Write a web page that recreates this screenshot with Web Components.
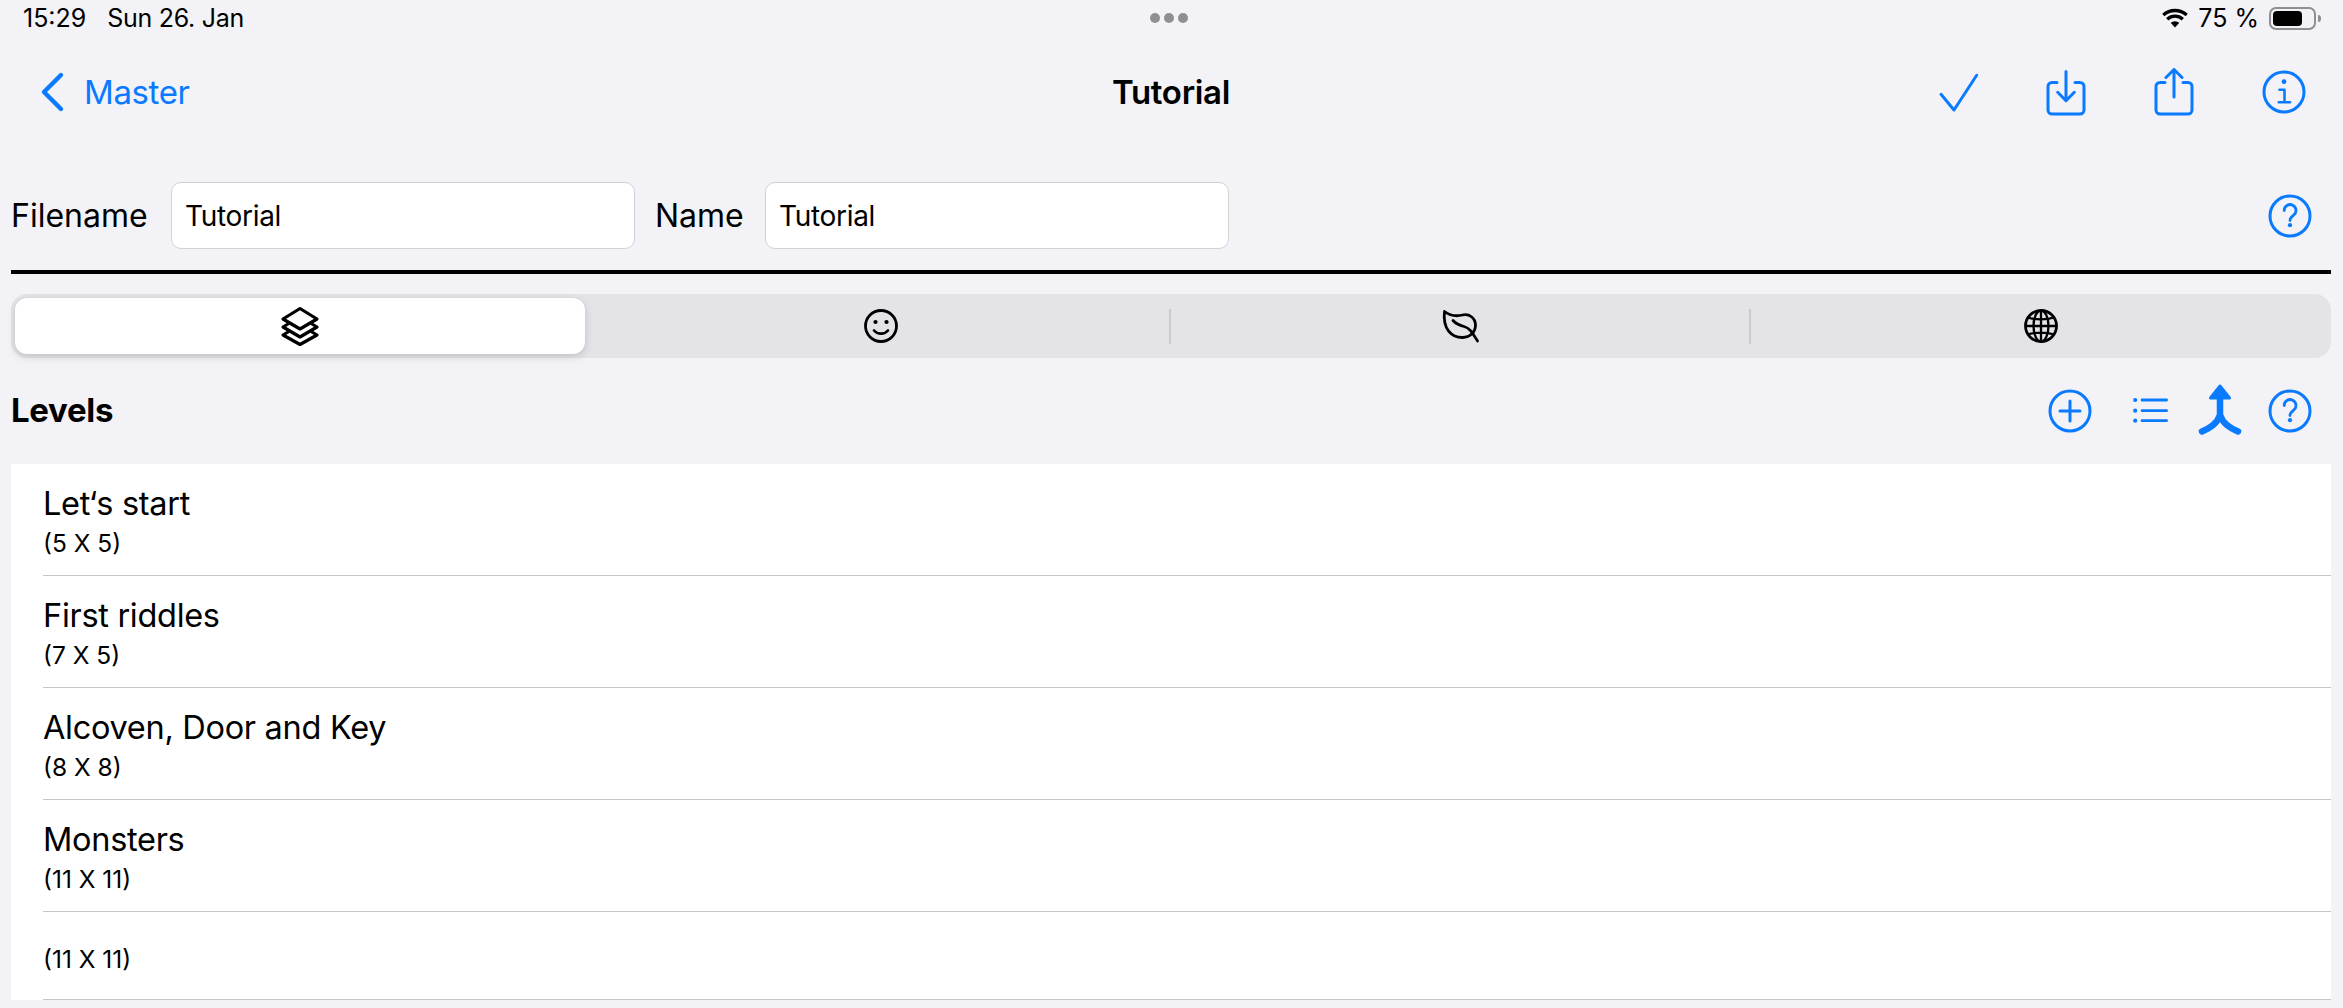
<!DOCTYPE html>
<html lang="en">
<head>
<meta charset="utf-8">
<title>Tutorial</title>
<style>
  html, body { margin: 0; background: #f2f2f7; }
  body { font-family: Inter, "Liberation Sans", sans-serif; color: #000; width: 2343px; height: 1008px; overflow: hidden; }
</style>
</head>
<body>
<editor-screen>
  <status-bar></status-bar>
  <nav-bar></nav-bar>
  <file-form></file-form>
  <tab-segments></tab-segments>
  <levels-header></levels-header>
  <level-list>
    <level-row><span slot="title">Let‘s start</span><span slot="sub">(5 X 5)</span></level-row>
    <level-row><span slot="title">First riddles</span><span slot="sub">(7 X 5)</span></level-row>
    <level-row><span slot="title">Alcoven, Door and Key</span><span slot="sub">(8 X 8)</span></level-row>
    <level-row><span slot="title">Monsters</span><span slot="sub">(11 X 11)</span></level-row>
    <level-row compact><span slot="sub">(11 X 11)</span></level-row>
  </level-list>
</editor-screen>
<script>
const ICONS = {
  check: [48, '<path d="M7 26.3 20 42 42.7 7.3" fill="none" stroke="currentColor" stroke-width="3" stroke-linecap="round" stroke-linejoin="round"/>'],
  download: [48, '<g fill="none" stroke="currentColor" stroke-width="3" stroke-linecap="round" stroke-linejoin="round"><path d="M15 14.5H10a4 4 0 0 0-4 4V42a4 4 0 0 0 4 4h28a4 4 0 0 0 4-4V18.5a4 4 0 0 0-4-4H33"/><path d="M24 3.5V32M15.7 24.3 24 32.7l8.3-8.4"/></g>'],
  share: [48, '<g fill="none" stroke="currentColor" stroke-width="3" stroke-linecap="round" stroke-linejoin="round"><path d="M15 14.5H10a4 4 0 0 0-4 4V42a4 4 0 0 0 4 4h28a4 4 0 0 0 4-4V18.5a4 4 0 0 0-4-4H33"/><path d="M24 2V29M16 9.5 24 1.5l8 8"/></g>'],
  info: [48, '<circle cx="24" cy="24" r="20" fill="none" stroke="currentColor" stroke-width="3"/><circle cx="24" cy="13.7" r="2.4" fill="currentColor"/><path d="M19.5 21.7H24.5V34M18.7 34.3H30" fill="none" stroke="currentColor" stroke-width="2.6" stroke-linecap="round" stroke-linejoin="round"/>'],
  help: [48, '<circle cx="24" cy="24" r="20" fill="none" stroke="currentColor" stroke-width="3"/><path d="M18.2 18.5a5.900 5.900 0 1 1 9.400 4.700c-2.200 1.700-3.600 2.700-3.600 5.300" fill="none" stroke="currentColor" stroke-width="2.800" stroke-linecap="round"/><circle cx="24" cy="33.2" r="2.100" fill="currentColor"/>'],
  plus: [48, '<circle cx="24" cy="24" r="20" fill="none" stroke="currentColor" stroke-width="3"/><path d="M14 24H34M24 14V34" fill="none" stroke="currentColor" stroke-width="3" stroke-linecap="round"/>'],
  list: [48, '<g fill="currentColor"><circle cx="8.2" cy="13" r="2.1"/><circle cx="8.2" cy="23.7" r="2.1"/><circle cx="8.2" cy="33.7" r="2.1"/></g><path d="M15 13H39.6M15 23.7H39.6M15 33.7H39.6" fill="none" stroke="currentColor" stroke-width="2.8" stroke-linecap="round"/>'],
  merge: [56, '<path d="M28 3 18.500 15H37.500Z" fill="currentColor" stroke="currentColor" stroke-width="3" stroke-linejoin="round"/><path d="M28 13V32M10 48.500C18 45 25 41 28 32 31 41 38 45 46 48.500" fill="none" stroke="currentColor" stroke-width="6.500" stroke-linecap="round" stroke-linejoin="round"/>'],
  chevron: [48, '<path d="M26 7 9 24 26 41" fill="none" stroke="currentColor" stroke-width="4.4" stroke-linecap="round" stroke-linejoin="round"/>'],
  layers: [60, '<g fill="none" stroke="currentColor" stroke-width="3.2" stroke-linejoin="round" stroke-linecap="round"><path d="M30 12.5 47 23 30 33 13 23Z"/><path d="M18 28 13 31 30 41 47 31 42 28"/><path d="M18 36 13 39 30 48.500 47 39 42 36"/></g>'],
  smile: [60, '<circle cx="30" cy="30" r="15.500" fill="none" stroke="currentColor" stroke-width="2.800"/><circle cx="24.500" cy="26" r="2.100" fill="currentColor"/><circle cx="35.500" cy="26" r="2.100" fill="currentColor"/><path d="M23 34.500c3.500 4.200 10.500 4.200 14 0" fill="none" stroke="currentColor" stroke-width="2.600" stroke-linecap="round"/>'],
  leaf: [60, '<g fill="none" stroke="currentColor" stroke-linecap="round" stroke-linejoin="round"><path d="M13.500 15.500c6 4.500 12 5 18 3.500 7-1.500 12.500 3 13 9.500.3 7.500-5.500 13-13 13-11 0-20-8.500-18-26Z" stroke-width="2.800"/><path d="M22 24.500c3.500 4 7 5 11 6 6 1.500 8.500 6.500 13.500 14.500" stroke-width="2.800"/></g>'],
  globe: [60, '<g fill="none" stroke="currentColor" stroke-width="2.300"><circle cx="30" cy="30" r="15.500" stroke-width="2.800"/><ellipse cx="30" cy="30" rx="7.500" ry="15.500"/><path d="M30 14.500V45.500M14.500 30H45.500M17 21.500C24 24 36 24 43 21.500M17 38.500C24 36 36 36 43 38.500"/></g>']
};

class BaseEl extends HTMLElement {
  static markup = '';
  constructor() {
    super();
    this.attachShadow({ mode: 'open' }).innerHTML = this.constructor.markup;
  }
}
function def(name, markup) {
  customElements.define(name, class extends BaseEl { static markup = markup; });
}

customElements.define('ui-icon', class extends HTMLElement {
  constructor() { super(); this.attachShadow({ mode: 'open' }); }
  connectedCallback() {
    const [size, body] = ICONS[this.getAttribute('name')];
    this.shadowRoot.innerHTML = `<style>:host{display:block;flex:none;width:${size}px;height:${size}px}svg{display:block}</style><svg xmlns="http://www.w3.org/2000/svg" width="${size}" height="${size}" viewBox="0 0 ${size} ${size}" aria-hidden="true">${body}</svg>`;
  }
});

def('editor-screen', `<style>:host{display:block;width:2343px;height:1008px;background:#f2f2f7}</style><slot></slot>`);

def('status-bar', `<style>
  :host{display:grid;grid-template-columns:1fr auto 1fr;align-items:center;height:36px;padding:0 22px 0 23px;font-size:25px;line-height:36px;box-sizing:border-box}
  .left{display:flex;gap:21px}
  .date{letter-spacing:-.3px}
  .dots{display:flex;gap:4px;margin-left:-6px}
  .dots i{display:block;width:10px;height:10px;border-radius:50%;background:#8e8e93}
  .right{display:flex;align-items:center;justify-content:flex-end}
  .pct{margin:0 10px 0 9px}
  .batt{display:flex;align-items:center;gap:2px}
  .shell{box-sizing:border-box;width:47px;height:23px;border:2px solid #8e8e93;border-radius:7px;padding:2px 12px 2px 2px}
  .shell i{display:block;height:100%;background:#000;border-radius:4px}
  .nub{width:3px;height:7px;background:#8e8e93;border-radius:0 3px 3px 0}
</style>
<div class="left"><span>15:29</span><span class="date">Sun 26. Jan</span></div>
<div class="dots"><i></i><i></i><i></i></div>
<div class="right">
  <svg width="28" height="20" viewBox="0 0 28 20" aria-hidden="true"><path d="M14 19.500 9.700 14.800a6.500 6.500 0 0 1 8.600 0Z" fill="#000"/><path d="M6.200 11.200a11.500 11.500 0 0 1 15.600 0M2.300 7A17.500 17.500 0 0 1 25.700 7" fill="none" stroke="#000" stroke-width="3.300"/></svg>
  <span class="pct">75 %</span>
  <div class="batt"><div class="shell"><i></i></div><div class="nub"></div></div>
</div>`);

def('nav-bar', `<style>
  :host{display:grid;grid-template-columns:1fr auto 1fr;align-items:center;height:112px;color:#0a7aff}
  .back{display:flex;align-items:center;padding-left:35px;font-size:33px;letter-spacing:-.4px}
  .back span{margin-left:1px}
  h1{margin:0 0 0 -1px;font-size:33px;font-weight:600;color:#000;letter-spacing:-.3px}
  .acts{display:flex;justify-content:flex-end;padding-right:35px;gap:60px}
  .wide{margin-right:2px}
</style>
<div class="back"><ui-icon name="chevron"></ui-icon><span>Master</span></div>
<h1>Tutorial</h1>
<div class="acts"><ui-icon name="check"></ui-icon><ui-icon name="download"></ui-icon><ui-icon class="wide" name="share"></ui-icon><ui-icon name="info"></ui-icon></div>`);

def('file-form', `<style>
  :host{display:flex;align-items:center;height:67px;margin-top:34px;padding:0 29px 0 11px;font-size:32px}
  label{display:block}
  .l1{width:160px}
  .l2{width:110px;margin-left:20.500px}
  .field{box-sizing:border-box;width:463.500px;height:67px;display:flex;align-items:center;padding-left:13px;background:#fff;border:1px solid #d1d1d6;border-radius:10px;font-size:28px;letter-spacing:-.3px}
  ui-icon{margin-left:auto;color:#0a7aff}
</style>
<label class="l1">Filename</label><div class="field">Tutorial</div>
<label class="l2">Name</label><div class="field">Tutorial</div>
<ui-icon name="help"></ui-icon>`);

def('tab-segments', `<style>
  :host{display:block;margin:0 12px 0 11px}
  .rule{height:4px;background:#000;margin-top:21px}
  .track{display:grid;grid-template-columns:repeat(4,1fr);grid-template-rows:64px;height:64px;margin:20px 0 0 0;background:#e3e3e8;border-radius:16px}
  .tab{display:flex;align-items:center;justify-content:center;min-height:0;--d:#c9c9ce;background:linear-gradient(var(--d),var(--d)) right center/2px 35px no-repeat}
  .tab.last{background:none}
  .tab.sel{height:56px;background:#fff;margin:4px 6px 4px 4px;border-radius:12px;box-shadow:0 3px 8px rgba(0,0,0,.14),0 0 1px rgba(0,0,0,.1)}
  .tab.sel ui-icon{margin:-2px 0}
</style>
<div class="rule"></div>
<div class="track">
  <div class="tab sel"><ui-icon name="layers"></ui-icon></div>
  <div class="tab"><ui-icon name="smile"></ui-icon></div>
  <div class="tab"><ui-icon name="leaf"></ui-icon></div>
  <div class="tab last"><ui-icon name="globe"></ui-icon></div>
</div>`);

def('levels-header', `<style>
  :host{display:flex;align-items:center;height:106px;padding:0 29px 0 11px;color:#0a7aff}
  h2{margin:-3px auto 0 0;font-size:33px;font-weight:700;color:#000;letter-spacing:-.3px}
  .g1{margin-left:33px}.g2{margin-left:16.500px}.g3{margin-left:18.500px}
</style>
<h2>Levels</h2>
<ui-icon name="plus"></ui-icon>
<ui-icon class="g1" name="list"></ui-icon>
<ui-icon class="g2" name="merge"></ui-icon>
<ui-icon class="g3" name="help"></ui-icon>`);

def('level-list', `<style>:host{display:block;margin:0 12px 0 11px;background:#fff}</style><slot></slot>`);

def('level-row', `<style>
  :host{display:block;height:112px;padding-left:32px;box-sizing:border-box}
  :host([compact]){height:88px}
  .inner{box-sizing:border-box;height:100%;border-bottom:1.5px solid #c6c6c8;padding-top:20px}
  :host([compact]) .inner{padding-top:32px}
  .t{font-size:32.500px;line-height:40px;letter-spacing:-.3px;min-height:40px}
  :host([compact]) .t{display:none}
  .s{font-size:24.500px;line-height:30px;margin-top:4px}
  :host([compact]) .s{margin-top:0}
</style>
<div class="inner"><div class="t"><slot name="title"></slot></div><div class="s"><slot name="sub"></slot></div></div>`);
</script>
</body>
</html>
